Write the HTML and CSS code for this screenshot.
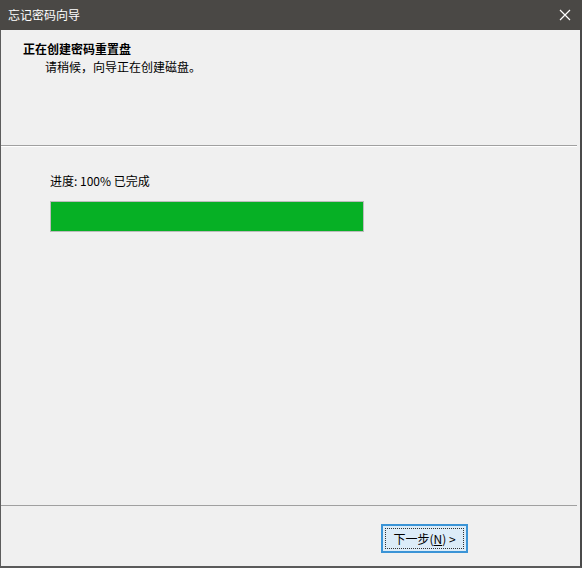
FILE: index.html
```html
<!DOCTYPE html>
<html lang="zh-CN">
<head>
<meta charset="utf-8">
<title>忘记密码向导</title>
<link rel="stylesheet" href="styles.css">
</head>
<body>
<div class="window">
  <div class="titlebar">
    <span class="title">忘记密码向导</span>
    <svg class="close" width="12" height="12" viewBox="0 0 12 12"><path d="M1 1 L11 11 M11 1 L1 11" stroke="#ffffff" stroke-width="1.2" fill="none"/></svg>
  </div>
  <div class="header">
    <div class="head-title">正在创建密码重置盘</div>
    <div class="head-sub">请稍候，向导正在创建磁盘。</div>
  </div>
  <div class="content">
    <div class="label">进度: 100% 已完成</div>
    <div class="bar"><div class="fill" style="width:100%"></div></div>
  </div>
  <div class="footer">
    <button class="btn"><span class="btn-inner">下一步(<u>N</u>) &gt;</span></button>
  </div>
</div>
</body>
</html>
```
FILE: styles.css
```css
html, body {
  margin: 0;
  padding: 0;
  background: #f0f0f0;
}
.window {
  width: 582px;
  height: 568px;
  box-sizing: border-box;
  display: flex;
  flex-direction: column;
  border-left: 1px solid #5c5c5c;
  border-right: 2px solid #4a4a4a;
  border-bottom: 2px solid #5a5a5a;
  background: #f0f0f0;
  font-family: "Noto Sans CJK SC", "Noto Sans", sans-serif;
  font-size: 12px;
  color: #000;
}
.titlebar {
  height: 30px;
  flex: none;
  background: #4a4845;
  display: flex;
  align-items: center;
  justify-content: space-between;
  padding: 0 11px 0 8px;
  margin-left: -1px;
  margin-right: -2px;
}
.title {
  color: #ffffff;
  font-size: 12px;
  line-height: 16px;
}
.close {
  display: block;
}
.header {
  height: 116px;
  flex: none;
  box-sizing: border-box;
  padding: 10px 0 0 22px;
  border-bottom: 1px solid #a0a0a0;
  box-shadow: 0 1px 0 #ffffff;
  margin-right: 3px;
}
.head-title {
  font-weight: bold;
  line-height: 18px;
}
.head-sub {
  line-height: 18px;
  padding-left: 22px;
}
.content {
  flex: 1;
  padding: 26px 0 0 49px;
}
.label {
  line-height: 18px;
  margin-bottom: 11px;
}
.bar {
  width: 314px;
  height: 31px;
  box-sizing: border-box;
  border: 1px solid #bcbcbc;
  background: #e6e6e6;
}
.fill {
  height: 100%;
  background: #06b025;
}
.footer {
  height: 61px;
  flex: none;
  box-sizing: border-box;
  border-top: 1px solid #a0a0a0;
  margin-right: 3px;
  padding: 18px 0 0 380px;
}
.btn {
  width: 87px;
  height: 29px;
  box-sizing: border-box;
  padding: 2px;
  margin: 0;
  border: 2px solid #3b94d6;
  background: #dcecf8;
  font-family: "Noto Sans CJK SC", "Noto Sans", sans-serif;
  font-size: 12px;
  color: #000;
  display: flex;
}
.btn-inner {
  flex: 1;
  border: 1px dotted #333;
  display: flex;
  align-items: center;
  justify-content: center;
  line-height: 16px;
}
```
